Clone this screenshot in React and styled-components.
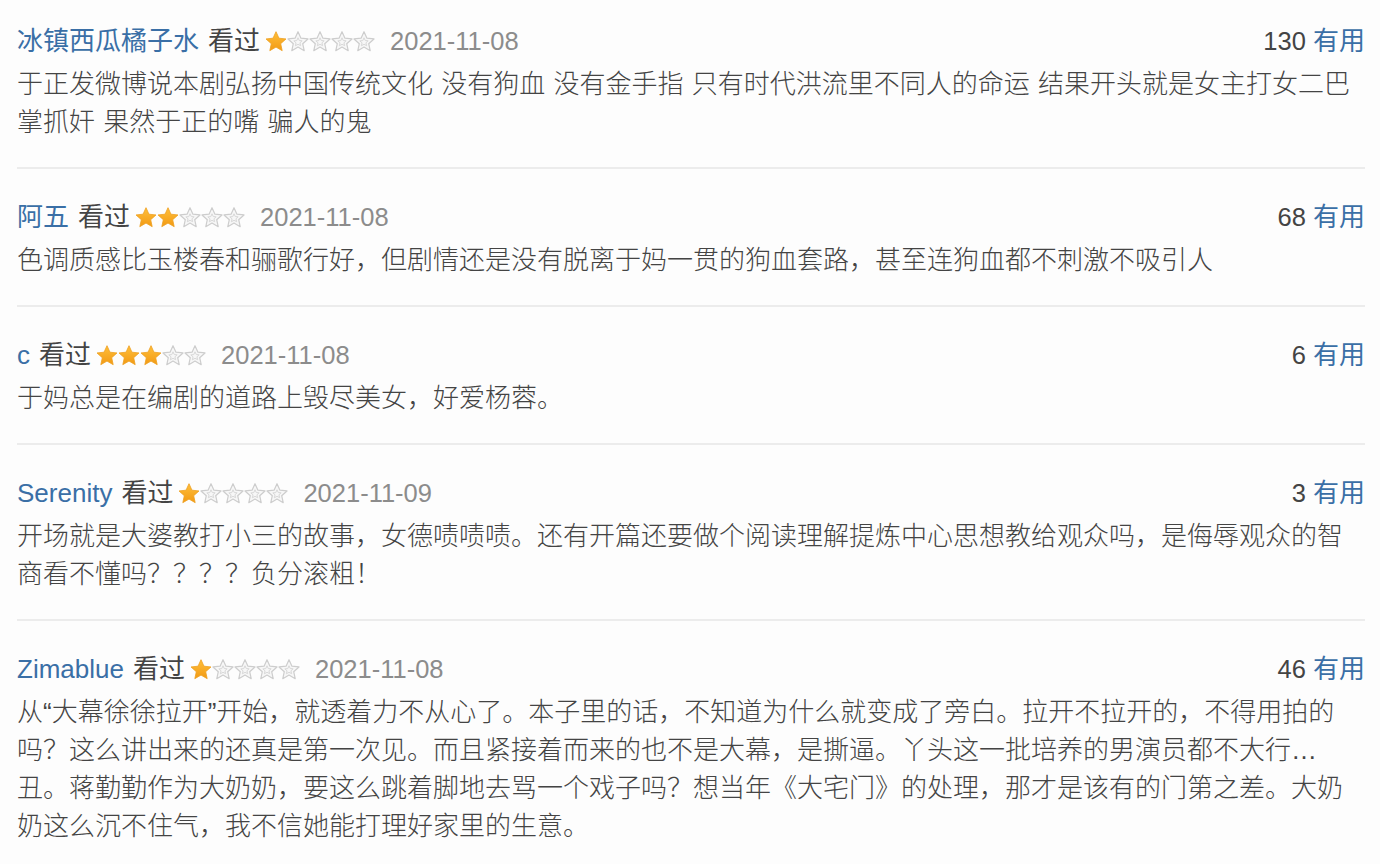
import React from "react";
import styled, { createGlobalStyle } from "styled-components";

const reviews = [
  {
    name: "冰镇西瓜橘子水",
    rating: 1,
    date: "2021-11-08",
    votes: 130,
    lines: [
      "于正发微博说本剧弘扬中国传统文化 没有狗血 没有金手指 只有时代洪流里不同人的命运 结果开头就是女主打女二巴",
      "掌抓奸 果然于正的嘴 骗人的鬼",
    ],
  },
  {
    name: "阿五",
    rating: 2,
    date: "2021-11-08",
    votes: 68,
    lines: ["色调质感比玉楼春和骊歌行好，但剧情还是没有脱离于妈一贯的狗血套路，甚至连狗血都不刺激不吸引人"],
  },
  {
    name: "c",
    rating: 3,
    date: "2021-11-08",
    votes: 6,
    lines: ["于妈总是在编剧的道路上毁尽美女，好爱杨蓉。"],
  },
  {
    name: "Serenity",
    rating: 1,
    date: "2021-11-09",
    votes: 3,
    lines: [
      "开场就是大婆教打小三的故事，女德啧啧啧。还有开篇还要做个阅读理解提炼中心思想教给观众吗，是侮辱观众的智",
      "商看不懂吗？？？？负分滚粗！",
    ],
  },
  {
    name: "Zimablue",
    rating: 1,
    date: "2021-11-08",
    votes: 46,
    lines: [
      "从“大幕徐徐拉开”开始，就透着力不从心了。本子里的话，不知道为什么就变成了旁白。拉开不拉开的，不得用拍的",
      "吗？这么讲出来的还真是第一次见。而且紧接着而来的也不是大幕，是撕逼。丫头这一批培养的男演员都不大行…",
      "丑。蒋勤勤作为大奶奶，要这么跳着脚地去骂一个戏子吗？想当年《大宅门》的处理，那才是该有的门第之差。大奶",
      "奶这么沉不住气，我不信她能打理好家里的生意。",
    ],
  },
];

const STAR = "M12 2.2l2.95 6.5 7.05.75-5.3 4.75 1.5 6.95L12 17.6l-6.2 3.55 1.5-6.95-5.3-4.75 7.05-.75z";

const Star = ({ on }) => (
  <StarSvg viewBox="1 1.5 22 21">
    <defs>
      <linearGradient id="gold" x1="0" y1="0" x2="0" y2="1">
        <stop offset="0" stopColor="#ffbf3a" />
        <stop offset="1" stopColor="#f29a14" />
      </linearGradient>
    </defs>
    {on ? (
      <path d={STAR} fill="url(#gold)" stroke="#eea020" strokeWidth="0.8" />
    ) : (
      <>
        <path d={STAR} fill="#f7f7f7" stroke="#cdcdcd" strokeWidth="1.2" strokeLinejoin="round" />
        <path d="M12 8.3l1.25 2.7 2.9.3-2.2 1.95.65 2.9L12 14.8l-2.6 1.45.65-2.9-2.2-1.95 2.9-.3z" fill="none" stroke="#d8d8d8" strokeWidth="1" />
      </>
    )}
  </StarSvg>
);

const App = () => {
  return (
    <>
      <GlobalStyle />
      <Page>
        {reviews.map((r) => (
          <Review key={r.name}>
            <Header>
              <Meta>
                <Name>{r.name}</Name>
                <Watched>看过</Watched>
                <Stars>
                  {[1, 2, 3, 4, 5].map((i) => (
                    <Star key={i} on={i <= r.rating} />
                  ))}
                </Stars>
                <DateText>{r.date}</DateText>
              </Meta>
              <Votes>
                {r.votes} <Useful>有用</Useful>
              </Votes>
            </Header>
            <Body>
              {r.lines.map((line, i) => (
                <Line key={i}>{line}</Line>
              ))}
            </Body>
          </Review>
        ))}
      </Page>
    </>
  );
};
export default App;

const GlobalStyle = createGlobalStyle`
  html, body {
    margin: 0;
    padding: 0;
    background: #fdfdfd;
  }
  body {
    font-family: "Liberation Sans", "Noto Sans CJK SC", sans-serif;
    color: #444;
    overflow: hidden;
  }
`;

const Page = styled.div`
  width: 1380px;
  height: 864px;
  padding: 0 15px 0 17px;
  box-sizing: border-box;
  overflow: hidden;
`;

const Review = styled.div`
  padding: 29px 0 26px 0;
  border-bottom: 2px solid #ececec;
  &:first-child {
    padding-top: 22px;
  }
`;

const Header = styled.div`
  display: flex;
  justify-content: space-between;
  align-items: center;
  height: 38px;
  font-size: 26px;
  line-height: 38px;
  margin-bottom: 5px;
  white-space: nowrap;
`;

const Meta = styled.div`
  display: flex;
  align-items: center;
`;

const Name = styled.span`
  color: #3a6fa6;
  margin-right: 9px;
`;

const Watched = styled.span`
  color: #444;
  margin-right: 5px;
`;

const Stars = styled.span`
  display: flex;
  align-items: center;
  margin-right: 15px;
`;

const StarSvg = styled.svg`
  width: 22px;
  height: 21px;
  display: block;
`;

const DateText = styled.span`
  color: #8c8c8c;
  font-size: 25.5px;
`;

const Votes = styled.div`
  color: #444;
  font-size: 25.5px;
`;

const Useful = styled.span`
  color: #3a6fa6;
  font-size: 26px;
`;

const Body = styled.div`
  font-size: 26px;
  line-height: 38px;
  word-spacing: 1px;
  font-weight: 300;
`;

const Line = styled.div`
  white-space: nowrap;
`;
